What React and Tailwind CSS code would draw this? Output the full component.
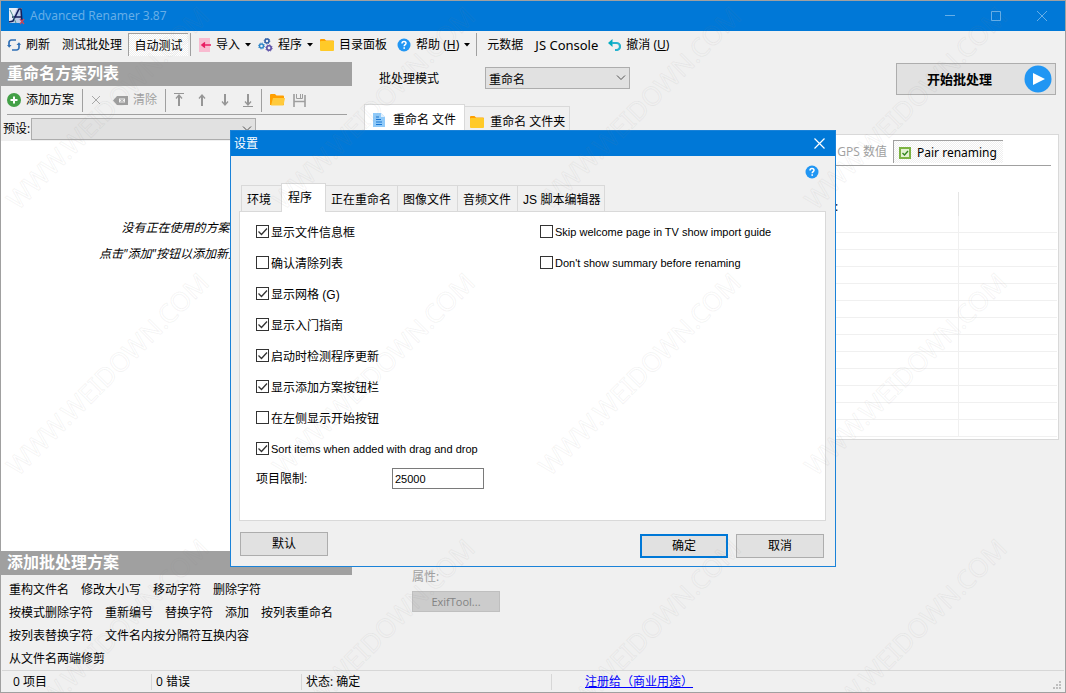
import React, { useState } from 'react';

const RefreshIcon = () => (
  <svg width="14" height="14" viewBox="0 0 14 14" fill="none" stroke="#2f6fb5" strokeWidth="1.7">
    <path d="M2 8V4.500A2.500 2.500 0 0 1 4.500 2H9M12 6v3.500A2.500 2.500 0 0 1 9.500 12H5" />
    <path d="M0 7h4.500L2.200 9.800zM9.500 7L12 4.200 14 7z" fill="#2f6fb5" stroke="none" />
  </svg>
);

const ImportIcon = () => (
  <svg width="12" height="14" viewBox="0 0 12 14">
    <path d="M0 0h11v14H0z" fill="#f8bbd0" />
    <path d="M3 7h9M6 4.500L3 7l3 2.500" fill="#e91e63" stroke="#e91e63" strokeWidth="1.600" />
  </svg>
);

const GearsIcon = () => (
  <svg width="15" height="14" viewBox="0 0 15 14" fill="none">
    <circle cx="9" cy="3" r="2" stroke="#2f5fa8" strokeWidth="1.500" />
    <circle cx="9" cy="3" r="2.800" stroke="#2f5fa8" strokeDasharray="1 1.200" />
    <circle cx="3.500" cy="8" r="2" stroke="#2f86c8" strokeWidth="1.500" />
    <circle cx="3.500" cy="8" r="3" stroke="#2f86c8" strokeDasharray="1 1.350" />
    <circle cx="11" cy="10" r="2.200" stroke="#5a4fa8" strokeWidth="1.600" />
    <circle cx="11" cy="10" r="3.200" stroke="#5a4fa8" strokeDasharray="1.200 1.300" />
  </svg>
);

const FolderIcon = () => (
  <svg width="14" height="12" viewBox="0 0 14 12">
    <path d="M0 1a1 1 0 0 1 1-1h3.500L6 1.500h7a1 1 0 0 1 1 1V11H0z" fill="#ffa000" />
    <rect x="0" y="2" width="14" height="10" rx="1" fill="#ffca28" />
  </svg>
);

const OpenFolderIcon = () => (
  <svg width="15" height="12" viewBox="0 0 15 12">
    <path d="M0 1a1 1 0 0 1 1-1h4l1.500 1.500H13a1 1 0 0 1 1 1V11H0z" fill="#ff9f00" />
    <path d="M3 4h12l-1.500 7.500H1z" fill="#ffca3c" />
  </svg>
);

const HelpIcon = () => (
  <svg width="14" height="14" viewBox="0 0 14 14">
    <circle cx="7" cy="7" r="6.500" fill="#2196f3" />
    <path d="M5 5.400C5 4 5.900 3.400 7 3.400s2 .7 2 1.800C9 6.600 7.200 6.700 7.200 8.300" stroke="#fff" strokeWidth="1.500" fill="none" />
    <rect x="6.400" y="9.300" width="1.600" height="1.500" fill="#fff" />
  </svg>
);

const UndoIcon = () => (
  <svg width="13" height="12" viewBox="0 0 13 12">
    <path d="M0 4l4.500-4v8z" fill="#00acc1" />
    <path d="M4 4h4.500a3 3 0 0 1 0 7H7" stroke="#26b3cf" strokeWidth="2.200" fill="none" />
  </svg>
);

const CaretIcon = () => (
  <svg width="6" height="4" viewBox="0 0 6 4"><path d="M0 0h6L3 3.500z" fill="#000" /></svg>
);

const PlusIcon = () => (
  <svg width="14" height="14" viewBox="0 0 14 14">
    <circle cx="7" cy="7" r="7" fill="#43a047" />
    <path d="M7 3.500v7M3.500 7h7" stroke="#fff" strokeWidth="2" />
  </svg>
);

const CrossIcon = () => (
  <svg width="10" height="10" viewBox="0 0 10 10"><path d="M1 1l8 8M9 1L1 9" stroke="#a8a8a8" /></svg>
);

const ClearIcon = () => (
  <svg width="15" height="9" viewBox="0 0 15 9">
    <path d="M0 4.500L4 0h11v9H4z" fill="#9e9e9e" />
    <path d="M6 2.500h6v4H6z" fill="#f0f0f0" />
    <path d="M7.500 3l3 3M10.500 3l-3 3" stroke="#9e9e9e" />
  </svg>
);

const MoveIcon = ({ down, bar }) => (
  <svg width="10" height="16" viewBox="0 0 10 16" className={down ? 'rotate-180' : ''} fill="none" stroke="#969696">
    {bar && <path d="M0 1.500h10" />}
    <path d="M5 4v10" strokeWidth="2" />
    <path d="M2 6.500L5 3l3 3.500" strokeWidth="1.300" />
  </svg>
);

const SaveIcon = () => (
  <svg width="13" height="13" viewBox="0 0 13 13" fill="none" stroke="#9e9e9e">
    <path d="M1 0v13M12 1v12M1 7.500h11" strokeWidth="1.600" />
    <path d="M3.500 0v4.500h6V0M7.500 0v4" />
  </svg>
);

const AppIcon = () => (
  <svg width="17" height="17" viewBox="0 0 17 17">
    <rect width="13" height="15" x="1" fill="#b9cbe6" />
    <path d="M1 0h8L3 15H1z" fill="#e6eef8" />
    <path d="M1 14l4-1 6-12h2l1 14M4 9h9" fill="none" stroke="#15205c" strokeWidth="1.600" />
    <path d="M2 2l3 6 3 7" fill="none" stroke="#4f8f8a" />
    <path d="M12 11l4 5M16 11l-4 5" stroke="#c94a5c" strokeWidth="1.300" />
  </svg>
);

const DocIcon = () => (
  <svg width="12" height="14" viewBox="0 0 12 14">
    <path d="M0 0h8l4 4v10H0z" fill="#90caf9" />
    <path d="M8 0l4 4H8z" fill="#e1f0fd" />
    <path d="M3 6.500h5M3 9h6M3 11.500h6M3 4h3" stroke="#1976d2" strokeWidth="1.200" />
  </svg>
);

const PlayIcon = () => (
  <svg width="28" height="28" viewBox="0 0 28 28">
    <circle cx="14" cy="14" r="13.500" fill="#2196f3" />
    <path d="M9 8l12 6-12 6z" fill="#fff" />
  </svg>
);

const PairIcon = () => (
  <svg width="12" height="12" viewBox="0 0 12 12">
    <rect x="1" y="1" width="10" height="10" fill="#e4f2d2" stroke="#7cb342" strokeWidth="2" />
    <path d="M3.500 6l2 2 3.500-4" fill="none" stroke="#33861f" strokeWidth="1.400" />
  </svg>
);

const Divider = () => <span className="h-[23px] w-px bg-[#a0a0a0]" />;

const PRESSED =
  'border-l border-t border-[#a0a0a0] bg-[repeating-conic-gradient(#ffffff_0_25%,#efefef_0_50%)] bg-[length:2px_2px]';

const ToolButton = ({ icon, label, caret, disabled }) => (
  <button className={`flex items-center gap-[5px] whitespace-nowrap ${disabled ? 'text-[#a0a0a0]' : ''}`}>
    {icon}
    {label && <span>{label}</span>}
    {caret && <CaretIcon />}
  </button>
);

const Combo = ({ label, options, className }) => (
  <div className={`relative h-[22px] ${className}`}>
    <select aria-label={label} className="size-full appearance-none border border-[#adadad] bg-[#e1e1e1] pl-[3px] pt-[3px]">
      {options.map((o) => <option key={o}>{o}</option>)}
    </select>
    <svg width="10" height="6" viewBox="0 0 10 6" className="pointer-events-none absolute right-1 top-2" fill="none" stroke="#505050">
      <path d="M1 .5l4 4 4-4" />
    </svg>
  </div>
);

const Check = ({ label, initial }) => {
  const [on, setOn] = useState(initial);
  const latin = /^[A-Z]/.test(label);
  return (
    <label className="flex h-[31px] items-center gap-0.5 whitespace-nowrap">
      <span className="relative size-[13px]">
        <input
          type="checkbox"
          checked={on}
          onChange={() => setOn(!on)}
          className="block size-[13px] appearance-none border border-[#333333] bg-white"
        />
        {on && (
          <svg viewBox="0 0 13 13" className="pointer-events-none absolute inset-0" fill="none" stroke="#333333" strokeWidth="1.300">
            <path d="M2.500 6.500l3 3 5.500-6" />
          </svg>
        )}
      </span>
      <span className={latin ? 'pt-px text-[11px]' : 'pt-0.5'}>{label}</span>
    </label>
  );
};

const ACTIONS = [
  ['重构文件名', '修改大小写', '移动字符', '删除字符'],
  ['按模式删除字符', '重新编号', '替换字符', '添加', '按列表重命名'],
  ['按列表替换字符', '文件名内按分隔符互换内容'],
  ['从文件名两端修剪'],
];

const OPTIONS = [
  ['显示文件信息框', true],
  ['确认清除列表', false],
  ['显示网格 (G)', true],
  ['显示入门指南', true],
  ['启动时检测程序更新', true],
  ['显示添加方案按钮栏', true],
  ['在左侧显示开始按钮', false],
  ['Sort items when added with drag and drop', true],
];

const EXTRA_OPTIONS = ['Skip welcome page in TV show import guide', "Don't show summary before renaming"];

const TABS = ['环境', '程序', '正在重命名', '图像文件', '音频文件', 'JS 脚本编辑器'];

const TitleBar = () => (
  <header className="flex h-[30px] shrink-0 items-center bg-[#0078d7] pl-[7px] text-[#66aee7]">
    <AppIcon />
    <h1 className="ml-[5px] flex-1 font-['Noto_Sans']">Advanced Renamer 3.87</h1>
    <button aria-label="最小化" className="grid h-full w-[46px] place-items-center">
      <svg width="10" height="10" stroke="currentColor"><path d="M0 4.500h10" /></svg>
    </button>
    <button aria-label="最大化" className="grid h-full w-[46px] place-items-center">
      <svg width="10" height="10" fill="none" stroke="currentColor"><path d="M.5 .5h9v9h-9z" /></svg>
    </button>
    <button aria-label="关闭" className="grid h-full w-[46px] place-items-center">
      <svg width="10" height="10" stroke="currentColor"><path d="M0 0l10 10M10 0L0 10" /></svg>
    </button>
  </header>
);

const MainToolbar = () => (
  <nav className="flex h-[31px] shrink-0 items-center pb-1 pl-1.5 font-['Noto_Sans','Noto_Sans_CJK_SC',sans-serif]">
    <ToolButton icon={<RefreshIcon />} label="刷新" />
    <div className="ml-3"><ToolButton label="测试批处理" /></div>
    <button className={`ml-1.5 h-[23px] w-[60px] whitespace-nowrap pt-0.5 ${PRESSED}`}>自动测试</button>
    <div className="ml-0.5 flex"><Divider /></div>
    <div className="ml-2 flex items-center gap-[7px]">
      <ToolButton icon={<ImportIcon />} label="导入" caret />
      <ToolButton icon={<GearsIcon />} label="程序" caret />
      <ToolButton icon={<FolderIcon />} label="目录面板" />
    </div>
    <div className="ml-2.5"><ToolButton icon={<HelpIcon />} label={<>帮助 (<u>H</u>)</>} caret /></div>
    <div className="ml-1.5 flex"><Divider /></div>
    <div className="ml-2.5 flex items-center gap-3">
      <ToolButton label="元数据" />
      <button className="whitespace-nowrap text-[13px]">JS Console</button>
    </div>
    <div className="ml-2.5"><ToolButton icon={<UndoIcon />} label={<>撤消 (<u>U</u>)</>} /></div>
  </nav>
);

const PanelHeading = ({ children }) => (
  <h2 className="flex h-6 shrink-0 items-center bg-[#a0a0a0] pb-0.5 pl-1.5 text-[16px] font-bold text-white">{children}</h2>
);

const MethodPanel = () => (
  <aside className="flex w-[351px] shrink-0 flex-col">
    <PanelHeading>重命名方案列表</PanelHeading>
    <div className="ml-1.5 mr-[5px] flex h-[29px] shrink-0 items-center border-b border-[#a0a0a0]">
      <ToolButton icon={<PlusIcon />} label="添加方案" />
      <div className="mx-2 flex"><Divider /></div>
      <div className="flex items-center gap-3">
        <ToolButton icon={<CrossIcon />} />
        <ToolButton icon={<ClearIcon />} label="清除" disabled />
      </div>
      <div className="mx-2 flex"><Divider /></div>
      <div className="flex items-center gap-[13px]">
        <ToolButton icon={<MoveIcon bar />} />
        <ToolButton icon={<MoveIcon />} />
        <ToolButton icon={<MoveIcon down />} />
        <ToolButton icon={<MoveIcon down bar />} />
      </div>
      <div className="mx-2 flex"><Divider /></div>
      <div className="flex items-center gap-2">
        <ToolButton icon={<OpenFolderIcon />} />
        <ToolButton icon={<SaveIcon />} />
      </div>
    </div>
    <div className="flex h-[26px] shrink-0 items-center pl-0.5 pt-0.5">
      <span className="w-7 whitespace-nowrap">预设:</span>
      <Combo label="预设" options={['']} className="w-[225px]" />
    </div>
    <div className="flex flex-1 flex-col items-center bg-white pr-0.5 pt-[74px] italic leading-[26px]">
      <p>没有正在使用的方案</p>
      <p>点击"添加"按钮以添加新方案</p>
    </div>
    <PanelHeading>添加批处理方案</PanelHeading>
    <div className="flex shrink-0 flex-col pl-2 pt-[3px]">
      {ACTIONS.map((row) => (
        <div key={row[0]} className="flex h-[23px] items-center gap-3">
          {row.map((a) => <button key={a} className="whitespace-nowrap">{a}</button>)}
        </div>
      ))}
    </div>
  </aside>
);

const FilePanel = () => (
  <section className="flex flex-1 flex-col pl-3 pr-1.5">
    <div className="flex h-[42px] items-start pl-[15px] pr-[3px] pt-px">
      <span className="w-[106px] pt-2">批处理模式</span>
      <Combo label="批处理模式" options={['重命名']} className="mt-1 w-[145px]" />
      <button className="ml-auto flex h-8 w-40 items-center border border-[#adadad] bg-[#e1e1e1] pl-[30px] pr-[3px] text-[13px] font-bold">
        开始批处理
        <span className="ml-auto"><PlayIcon /></span>
      </button>
    </div>
    <div className="flex h-[30px] items-end">
      <button className="flex h-[30px] items-center gap-2 border border-b-0 border-[#d9d9d9] bg-white px-2">
        <DocIcon />重命名 文件
      </button>
      <button className="flex h-7 items-center gap-1.5 border border-b-0 border-l-0 border-[#d9d9d9] pl-[5px] pr-1 pt-0.5">
        <FolderIcon />重命名 文件夹
      </button>
    </div>
    <div className="border border-[#d9d9d9] bg-white pb-0.5">
      <div className="mr-[7px] flex h-[31px] items-center justify-end gap-1.5 border-b border-[#a0a0a0] pr-12 pt-0.5">
        <button disabled className="pt-0.5 text-[#a0a0a0]">GPS 数值</button>
        <button className={`flex h-[23px] w-[110px] items-center gap-1.5 whitespace-nowrap pl-[5px] pt-0.5 font-['Noto_Sans'] ${PRESSED}`}>
          <PairIcon />Pair renaming
        </button>
      </div>
      <table className="mt-[26px] w-full table-fixed border-separate border-spacing-0 pr-px">
        <thead>
          <tr className="h-6">
            <th className="w-[594px] border-r border-[#e5e5e5] pl-[470px] pt-1.5 text-left font-normal">:</th>
            <th></th>
          </tr>
        </thead>
        <tbody>
          {[...Array(13).keys()].map((i) => (
            <tr key={i} className="h-[17px]">
              <td className="border-b border-r border-[#f0f0f0]"></td>
              <td className="border-b border-[#f0f0f0]"></td>
            </tr>
          ))}
        </tbody>
      </table>
    </div>
    <div className="mt-32 flex flex-col items-start gap-[5px] pl-12 text-[#a0a0a0]">
      <span className="leading-[18px]">属性:</span>
      <button disabled className="h-[21px] w-[88px] border border-[#bfbfbf] bg-[#cccccc] text-[11px] text-[#838383]">ExifTool...</button>
    </div>
  </section>
);

const StatusBar = () => (
  <footer className="mx-px flex h-[22px] shrink-0 items-center border-t border-[#d7d7d7]">
    <span className="w-[150px] border-r border-[#d7d7d7] pl-[11px]">0 项目</span>
    <span className="w-[150px] border-r border-[#d7d7d7] pl-1">0 错误</span>
    <span className="w-[250px] border-r border-[#d7d7d7] pl-1">状态: 确定</span>
    <a href="#register" className="ml-[33px] text-[#0000ff] underline">注册给（商业用途）</a>
    <svg width="9" height="9" className="ml-auto mr-0.5 mt-2" fill="#bfbfbf">
      <path d="M6 0h2v2H6zM6 3h2v2H6zM3 3h2v2H3zM6 6h2v2H6zM3 6h2v2H3zM0 6h2v2H0z" />
    </svg>
  </footer>
);

const SettingsDialog = () => {
  const [tab, setTab] = useState('程序');

  return (
    <div
      role="dialog"
      aria-label="设置"
      className="flex w-[606px] flex-col border border-[#1a82d8] bg-[#f0f0f0] font-['Liberation_Sans','Noto_Sans_CJK_SC',sans-serif]"
    >
      <div className="flex h-[25px] items-center justify-between bg-[#0078d7] pl-[3px] pr-2.5 text-white">
        <h2>设置</h2>
        <button aria-label="关闭设置">
          <svg width="11" height="11" viewBox="0 0 11 11" stroke="#fff" strokeWidth="1.200"><path d="M.5 .5l10 10M10.500 .5l-10 10" /></svg>
        </button>
      </div>
      <div className="pb-2 pl-2 pr-[9px] pt-2">
        <div className="flex justify-end pr-[7px] pt-px">
          <button aria-label="帮助"><HelpIcon /></button>
        </div>
        <div role="tablist" className="relative -mb-px mt-1 flex h-[29px] items-end pl-0.5">
          {TABS.map((t) => (
            <button
              key={t}
              role="tab"
              aria-selected={t === tab}
              onClick={() => setTab(t)}
              className={
                t === tab
                  ? 'h-[29px] whitespace-nowrap border border-b-0 border-[#d9d9d9] bg-white pl-1.5 pr-[13px]'
                  : 'h-[27px] whitespace-nowrap border border-l-0 border-[#d9d9d9] pl-[5px] pr-1.5 pt-0.5 first:border-l first:border-r-0 first:pr-2.5 last:pr-1'
              }
            >
              {t}
            </button>
          ))}
        </div>
        <div className="h-[310px] border border-[#d9d9d9] bg-white pl-4 pt-1">
          <div className="flex">
            <div className="w-[284px]">
              {OPTIONS.map(([label, on]) => <Check key={label} label={label} initial={on} />)}
            </div>
            <div>
              {EXTRA_OPTIONS.map((label) => <Check key={label} label={label} initial={false} />)}
            </div>
          </div>
          <div className="mt-1 flex items-center">
            <label htmlFor="limit" className="w-[136px]">项目限制:</label>
            <input id="limit" defaultValue="25000" className="h-[21px] w-[92px] border border-[#7a7a7a] bg-white pl-0.5 text-[11px]" />
          </div>
        </div>
        <div className="mt-[11px] flex items-start gap-2 pl-px pr-0.5">
          <button className="mr-auto h-6 w-[88px] border border-[#adadad] bg-[#e1e1e1]">默认</button>
          <button className="mt-0.5 h-6 w-[88px] border-2 border-[#0078d7] bg-[#e1e1e1]">确定</button>
          <button className="mt-0.5 h-6 w-[88px] border border-[#adadad] bg-[#e1e1e1]">取消</button>
        </div>
      </div>
    </div>
  );
};

const Watermark = () => (
  <svg className="pointer-events-none absolute inset-0 size-full" aria-hidden="true">
    {[0, 1, 2].map((row) =>
      [0, 1, 2, 3].map((col) => (
        <text
          key={`${row}-${col}`}
          transform={`translate(${17 + col * 266} ${210 + row * 266}) rotate(-45)`}
          fontFamily="Noto Sans"
          fontSize="26"
          fill="none"
          stroke="#808080"
          strokeOpacity="0.09"
          strokeWidth="1"
        >
          WWW.WEIDOWN.COM
        </text>
      ))
    )}
  </svg>
);

export default function App() {
  return (
    <div className="relative flex min-h-screen flex-col overflow-hidden border border-[#a0a0a0] bg-[#f0f0f0] font-['Open_Sans','Noto_Sans_CJK_SC',sans-serif] text-[12px] leading-4 text-black">
      <TitleBar />
      <MainToolbar />
      <main className="flex flex-1">
        <MethodPanel />
        <FilePanel />
      </main>
      <StatusBar />
      <div className="absolute inset-0 flex items-center justify-center pt-1">
        <SettingsDialog />
      </div>
      <Watermark />
    </div>
  );
}
